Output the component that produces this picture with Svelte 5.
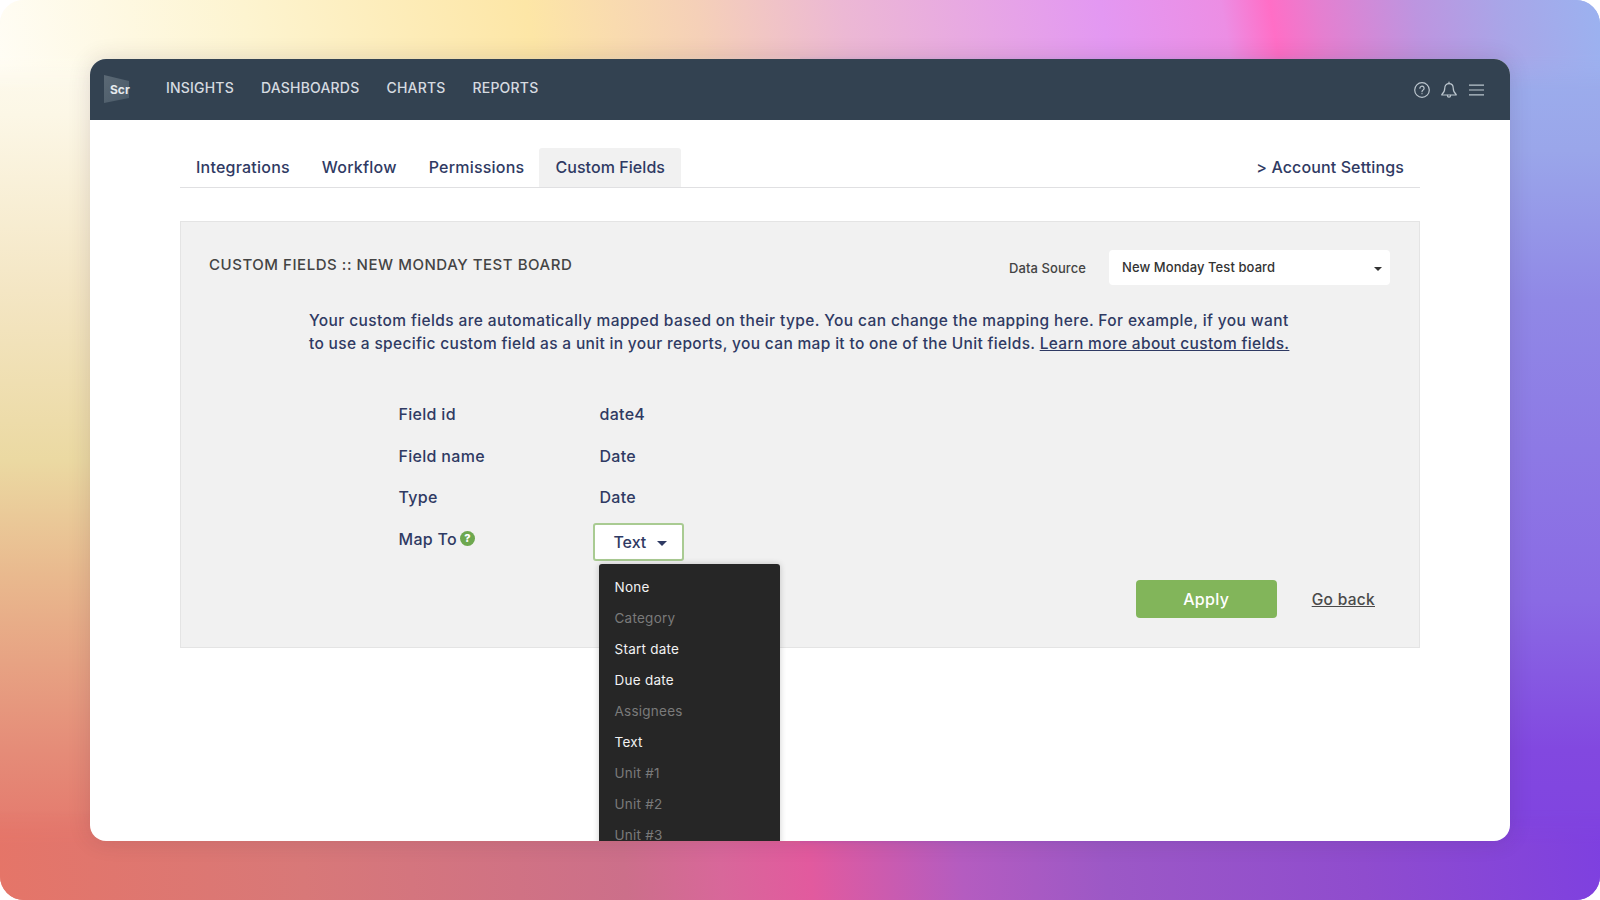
<script>
  const navItems = ['INSIGHTS', 'DASHBOARDS', 'CHARTS', 'REPORTS'];
  const tabs = ['Integrations', 'Workflow', 'Permissions', 'Custom Fields'];
  const activeTab = 'Custom Fields';
  const details = [
    ['Field id', 'date4'],
    ['Field name', 'Date'],
    ['Type', 'Date']
  ];
  const options = [
    { label: 'None' },
    { label: 'Category', off: true },
    { label: 'Start date' },
    { label: 'Due date' },
    { label: 'Assignees', off: true },
    { label: 'Text' },
    { label: 'Unit #1', off: true },
    { label: 'Unit #2', off: true },
    { label: 'Unit #3', off: true }
  ];
</script>

<div class="page">
  <div class="window">
    <header class="nav">
      <div class="logo">
        <svg width="28" height="30" viewBox="0 0 28 30">
          <defs>
            <linearGradient id="lg" x1="0" y1="0" x2="1" y2="1">
              <stop offset="0" stop-color="#5b6975" />
              <stop offset="1" stop-color="#4a5a68" />
            </linearGradient>
          </defs>
          <polygon points="2,1 27,7 27,24 2,29" fill="url(#lg)" />
        </svg>
        <span>Scr</span>
      </div>
      <nav class="menu">
        {#each navItems as item}
          <a href="#top">{item}</a>
        {/each}
      </nav>
      <div class="icons">
        <svg width="18" height="18" viewBox="0 0 18 18" fill="none" stroke="#bcc6ce" stroke-width="1.2">
          <circle cx="9" cy="9" r="7.3" />
          <path d="M6.9 7.2a2.1 2.1 0 1 1 3.2 1.8c-.7.4-1.1.9-1.1 1.7" stroke-linecap="round" />
          <circle cx="9" cy="12.7" r=".6" fill="#bcc6ce" stroke="none" />
        </svg>
        <svg class="bell" width="18" height="18" viewBox="0 0 18 18" fill="none" stroke="#bcc6ce" stroke-width="1.2">
          <path d="M9 2.6c-2.6 0-4.2 1.9-4.2 4.4 0 3.4-1.1 5-3 6.4v.6h14.4v-.6c-1.9-1.4-3-3-3-6.4 0-2.5-1.6-4.4-4.2-4.4z" stroke-linejoin="round" />
          <path d="M7.4 14.4c0 2.2 3.2 2.2 3.2 0M9 1v1.6" stroke-linecap="round" />
        </svg>
        <svg class="burger" width="15" height="12" viewBox="0 0 15 12" fill="none" stroke="#bcc6ce" stroke-width="1.2">
          <path d="M0 1.2h15M0 6h15M0 10.8h15" />
        </svg>
      </div>
    </header>

    <main class="content">
      <div class="tabs">
        {#each tabs as tab}
          <a href="#top" class="tab" class:active={tab === activeTab}>{tab}</a>
        {/each}
        <a href="#top" class="account">&gt; Account Settings</a>
      </div>

      <section class="panel">
        <div class="panel-head">
          <h2>CUSTOM FIELDS :: NEW MONDAY TEST BOARD</h2>
          <div class="source">
            <span class="source-label">Data Source</span>
            <div class="select">
              New Monday Test board
              <i class="caret small"></i>
            </div>
          </div>
        </div>

        <p class="intro">
          <span class="first">Your custom fields are automatically mapped based on their type. You can change the mapping here. For example, if you want</span><br />
          to use a specific custom field as a unit in your reports, you can map it to one of the Unit fields. <a href="#top">Learn more about custom fields.</a>
        </p>

        <div class="fields">
          {#each details as [label, value]}
            <div class="row">
              <div class="label">{label}</div>
              <div class="value">{value}</div>
            </div>
          {/each}
          <div class="row">
            <div class="label">Map To <span class="help">?</span></div>
            <div class="map">
              <button class="map-btn">Text <i class="caret"></i></button>
              <ul class="dropdown">
                {#each options as o}
                  <li class:off={o.off}>{o.label}</li>
                {/each}
              </ul>
            </div>
          </div>
        </div>

        <div class="actions">
          <button class="apply">Apply</button>
          <a href="#top" class="back">Go back</a>
        </div>
      </section>
    </main>
  </div>
</div>

<style>
  :global(body) {
    margin: 0;
    background: #fff;
  }

  .page {
    position: relative;
    box-sizing: border-box;
    width: 1600px;
    height: 900px;
    padding: 59px 90px;
    overflow: hidden;
    border-radius: 24px;
    font-family: Inter, "Open Sans", sans-serif;
    background:
      linear-gradient(180deg, #fffdf5 0, #fcf7e6 115px, #f4e6c4 290px, #ebd9a2 460px, #e9b98e 575px, #e58c78 750px, #e4746a 860px, #e4746a 900px) left / 50% 100% no-repeat,
      linear-gradient(180deg, #9db3ef 0, #9aa6ea 150px, #9088e6 300px, #8a6ae4 600px, #8248e0 750px, #7e40e0 900px) right / 50% 100% no-repeat;
  }
  .page::before,
  .page::after {
    content: "";
    position: absolute;
    left: 0;
    right: 0;
    height: 90px;
  }
  .page::before {
    top: 0;
    background: linear-gradient(80deg, #fffdf5 0, #fdf4d0 16%, #fde6a6 33.5%, #f5d0b8 44%, #ecb8d4 53%, #e398f2 69%, #ec8ee4 76.5%, #ff6ec6 79.5%, #e57fd0 82.5%, #bd95e0 88.5%, #a8a6e8 94%, #9bb2f0 100%);
    -webkit-mask-image: linear-gradient(180deg, #000 55px, transparent 90px);
    mask-image: linear-gradient(180deg, #000 55px, transparent 90px);
  }
  .page::after {
    bottom: 0;
    background: linear-gradient(85deg, #e57568 0, #d87878 19%, #cc6f8a 39%, #d8679a 45%, #e25a9e 50.5%, #b45cc0 60%, #9c58c6 69%, #8f4cce 85%, #7e40e0 100%);
    -webkit-mask-image: linear-gradient(0deg, #000 55px, transparent 90px);
    mask-image: linear-gradient(0deg, #000 55px, transparent 90px);
  }

  .window {
    position: relative;
    z-index: 1;
    height: 782px;
    background: #fff;
    border-radius: 16px;
    overflow: hidden;
    box-shadow: 0 0 22px rgba(60, 40, 60, 0.16);
  }

  .nav {
    display: flex;
    align-items: center;
    height: 61px;
    padding: 0 26px 0 12px;
    background: #334251;
  }

  .logo {
    display: grid;
    width: 28px;
    height: 30px;
    margin-right: 36px;
    margin-top: -1px;
  }
  .logo svg,
  .logo span {
    grid-area: 1 / 1;
  }
  .logo span {
    align-self: center;
    margin: 1px 0 0 8px;
    color: #e6eaed;
    font-size: 12px;
    font-weight: 700;
  }

  .menu {
    display: flex;
    gap: 27px;
    margin-top: -4px;
  }
  .menu a {
    color: #d6dbe0;
    font-size: 14px;
    font-weight: 500;
    letter-spacing: 0.2px;
    text-decoration: none;
  }

  .icons {
    display: flex;
    align-items: center;
    gap: 9px;
    margin-left: auto;
    padding-top: 0;
  }
  .burger {
    margin-left: 2px;
  }

  .content {
    padding: 28px 90px 0;
  }

  .tabs {
    display: flex;
    align-items: stretch;
    height: 39px;
    border-bottom: 1px solid #e0e0e2;
  }
  .tab {
    display: flex;
    align-items: center;
    padding: 0 16px 2px;
    color: #2f3a63;
    font-size: 16px;
    font-weight: 500;
    letter-spacing: 0.22px;
    text-decoration: none;
    border-radius: 3px 3px 0 0;
  }
  .tab.active {
    background: #f1f1f1;
    margin-left: -1px;
    letter-spacing: 0.06px;
  }
  .account {
    display: flex;
    align-items: center;
    margin-left: auto;
    padding: 0 16px 2px 0;
    color: #2f3a63;
    font-size: 16px;
    font-weight: 500;
    letter-spacing: 0.12px;
    text-decoration: none;
  }

  .panel {
    box-sizing: border-box;
    height: 427px;
    margin-top: 33px;
    padding: 28px 29px 0 28px;
    background: #f1f1f1;
    border: 1px solid #e4e4e4;
  }

  .panel-head {
    display: flex;
    justify-content: space-between;
    align-items: flex-start;
  }
  h2 {
    margin: 6px 0 0;
    color: #444;
    font-size: 15px;
    font-weight: 500;
    letter-spacing: 0.54px;
    line-height: 18px;
  }
  .source {
    display: flex;
    align-items: center;
    gap: 23px;
    color: #444;
    font-size: 13px;
    font-weight: 500;
    letter-spacing: 0.08px;
  }
  .source-label {
    margin: 1px 1px 0 0;
  }
  .select {
    position: relative;
    box-sizing: border-box;
    width: 281px;
    height: 35px;
    margin-left: -1px;
    padding: 0 13px;
    line-height: 35px;
    color: #333;
    background: #fff;
    border-radius: 4px;
  }
  .caret {
    display: inline-block;
    width: 0;
    height: 0;
    margin-left: 6px;
    vertical-align: middle;
    border: 5px solid transparent;
    border-top-color: #2f3a63;
    border-bottom-width: 0;
  }
  .caret.small {
    position: absolute;
    right: 8px;
    top: 17px;
    border-width: 4px 4px 0;
    border-top-color: #333;
  }

  .intro {
    margin: 24px 0 0 100px;
    color: #2f3a63;
    font-size: 15.5px;
    font-weight: 500;
    letter-spacing: 0.33px;
    line-height: 23px;
    white-space: nowrap;
  }
  .intro .first {
    letter-spacing: 0.39px;
  }
  .intro a {
    color: inherit;
  }

  .fields {
    margin: 48px 0 0 189.5px;
  }
  .row {
    display: flex;
    height: 41.6px;
    align-items: flex-start;
    font-size: 16px;
    font-weight: 500;
    letter-spacing: 0.3px;
    line-height: 22px;
    color: #2f3a63;
  }
  .label {
    display: flex;
    align-items: center;
    gap: 3px;
    width: 201px;
  }
  .help {
    width: 15px;
    height: 15px;
    border-radius: 50%;
    background: #6ea84f;
    color: #fff;
    font-size: 11px;
    font-weight: 800;
    line-height: 15px;
    text-align: center;
  }
  .map {
    position: relative;
  }
  .map-btn {
    box-sizing: border-box;
    display: block;
    width: 91px;
    height: 38px;
    margin: -5px 0 0 -6.5px;
    padding: 0 0 0 3px;
    color: #2f3a63;
    font: inherit;
    background: #fff;
    border: 2px solid #a9cb92;
    border-radius: 3px;
  }
  .dropdown {
    position: absolute;
    left: -1px;
    top: 36px;
    width: 181px;
    margin: 0;
    padding: 8px 0;
    list-style: none;
    background: #262626;
    border-radius: 3px;
    box-shadow: 0 0 6px rgba(0, 0, 0, 0.2);
  }
  .dropdown li {
    height: 31px;
    padding-left: 16px;
    color: #f2f2f2;
    font-size: 13.5px;
    font-weight: 400;
    letter-spacing: 0.25px;
    line-height: 31px;
  }
  .dropdown li.off {
    color: #7a7a7a;
  }

  .actions {
    display: flex;
    align-items: center;
    justify-content: flex-end;
    gap: 35px;
    margin: 11px 15px 0 0;
  }
  .apply {
    width: 141px;
    height: 38px;
    color: #fff;
    font: inherit;
    font-size: 16px;
    font-weight: 500;
    letter-spacing: 0.3px;
    background: #82b55a;
    border: 0;
    border-radius: 4px;
  }
  .back {
    color: #4a4a4a;
    font-size: 15.5px;
    font-weight: 500;
    letter-spacing: 0.3px;
  }
</style>
